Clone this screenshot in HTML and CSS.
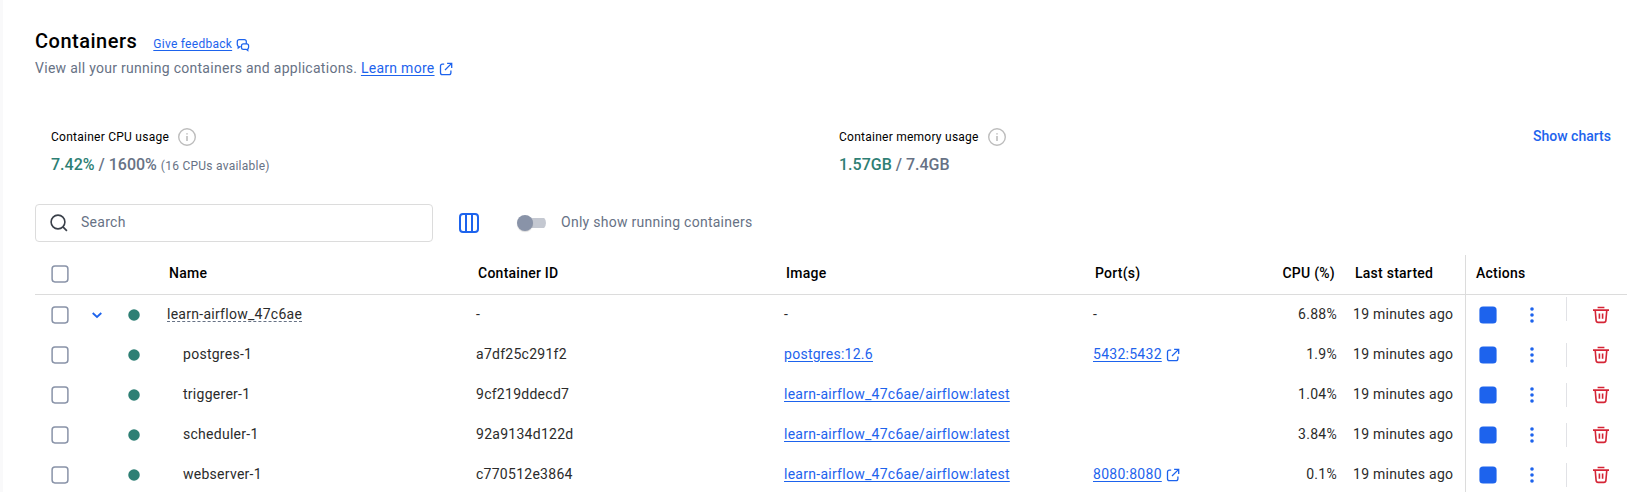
FILE: index.html
```
<!DOCTYPE html>
<html lang="en">
<head>
<meta charset="utf-8">
<title>Containers</title>
<link rel="stylesheet" href="styles.css">
</head>
<body>
<svg class="defs" width="0" height="0">
  <symbol id="i-external" viewBox="0 0 14 14"><path d="M5.2 2.2H3.4Q1.5 2.2 1.5 4.1v6.6q0 1.9 1.9 1.9H10q1.9 0 1.9-1.9V8.6M8.1 1.3h4.6v4.6M12.4 1.6 6 8" fill="none" stroke="currentColor" stroke-width="1.3"/></symbol>
  <symbol id="i-feedback" viewBox="0 0 14 14"><path d="M4.6 8.7H3.9L2.2 10V8.2Q1.3 7.6 1.3 6.5V3.6q0-2 2-2h5q2 0 2 2v1.6M7.4 5.9h3.3q1.9 0 1.9 1.9v1.5q0 1-.8 1.6v1.6l-1.6-1.2H7.4q-1.9 0-1.9-1.9V7.8q0-1.9 1.9-1.9Z" fill="none" stroke="currentColor" stroke-width="1.25"/></symbol>
  <symbol id="i-info" viewBox="0 0 18 18"><circle cx="9" cy="9" r="8.3" fill="none" stroke="currentColor" stroke-width="1.4"/><path d="M8.2 5.2h1.6v1.4H8.2zM8.2 7.9h1.6v5H8.2z" fill="currentColor"/></symbol>
  <symbol id="i-trash" viewBox="0 0 18 18"><path d="M5.6 1.5h6.8M1 4.1h16M3.2 4.2l.9 10.2q.2 2 2 2h5.8q1.8 0 2-2l.9-10.2M7.4 7.5v5.2M10.6 7.5v5.2" fill="none" stroke="currentColor" stroke-width="1.6"/></symbol>
  <symbol id="i-more" viewBox="0 0 4 16"><circle cx="2" cy="2" r="1.8" fill="currentColor"/><circle cx="2" cy="8" r="1.8" fill="currentColor"/><circle cx="2" cy="14" r="1.8" fill="currentColor"/></symbol>
  <symbol id="i-check" viewBox="0 0 18 18"><rect x="1.1" y="1.1" width="15.8" height="15.8" rx="2.8" fill="none" stroke="currentColor" stroke-width="1.5"/></symbol>
  <symbol id="i-dot" viewBox="0 0 12 12"><circle cx="6" cy="6" r="5.75" fill="currentColor"/></symbol>
  <symbol id="i-stop" viewBox="0 0 18 18"><rect x=".4" y=".4" width="17.2" height="17.2" rx="3.6" fill="currentColor"/></symbol>
</svg>
<main class="page">
  <header class="title-row">
    <h1>Containers</h1>
    <span class="feedback"><a href="#">Give feedback</a><svg width="14" height="14"><use href="#i-feedback"/></svg></span>
  </header>
  <p class="subtitle">View all your running containers and applications. <a href="#">Learn more</a><svg width="14" height="14"><use href="#i-external"/></svg></p>

  <section class="stats">
    <div class="stat">
      <div class="stat-label">Container CPU usage<svg width="18" height="18"><use href="#i-info"/></svg></div>
      <div class="stat-value"><b>7.42%</b> / 1600% <small>(16 CPUs available)</small></div>
    </div>
    <div class="stat">
      <div class="stat-label">Container memory usage<svg width="18" height="18"><use href="#i-info"/></svg></div>
      <div class="stat-value"><b>1.57GB</b> / 7.4GB</div>
    </div>
    <a class="show-charts">Show charts</a>
  </section>

  <section class="toolbar">
    <div class="search">
      <svg width="18" height="18" viewBox="0 0 18 18"><circle cx="8" cy="8" r="6.9" fill="none" stroke="#393f49" stroke-width="1.6"/><path d="m12.9 12.9 4 4" stroke="#393f49" stroke-width="1.7"/></svg>
      <span>Search</span>
    </div>
    <svg class="columns" width="20" height="20" viewBox="0 0 20 20"><path d="M4 1h12q3 0 3 3v12q0 3-3 3H4q-3 0-3-3V4q0-3 3-3ZM7 1v18M13 1v18" fill="none" stroke="#1d63ed" stroke-width="2"/></svg>
    <span class="switch"><i></i></span>
    <span class="switch-label">Only show running containers</span>
  </section>

  <section class="table">
    <div class="row head">
      <div class="mid"><svg class="check" width="18" height="18"><use href="#i-check"/></svg></div><div></div><div></div>
      <div class="cell">Name</div><div class="cell">Container ID</div><div class="cell">Image</div><div class="cell">Port(s)</div>
      <div class="cell num">CPU (%)</div><div class="cell">Last started</div><div class="cell actions-head">Actions</div>
    </div>
    <div class="row group">
      <div class="mid"><svg class="check" width="18" height="18"><use href="#i-check"/></svg></div>
      <div class="mid"><svg width="12" height="12" viewBox="0 0 12 12"><path d="M1.7 4 6 8l4.3-4" fill="none" stroke="#1d63ed" stroke-width="1.8"/></svg></div>
      <div class="mid"><svg class="dot" width="12" height="12"><use href="#i-dot"/></svg></div>
      <div class="cell"><span class="app">learn-airflow_47c6ae</span></div><div class="cell">-</div><div class="cell">-</div><div class="cell">-</div>
      <div class="cell num">6.88%</div><div class="cell">19 minutes ago</div>
      <div class="actions"><svg class="stop" width="18" height="18"><use href="#i-stop"/></svg><svg class="more" width="4" height="16"><use href="#i-more"/></svg><i class="sep"></i><svg class="trash" width="18" height="18"><use href="#i-trash"/></svg></div>
    </div>
    <div class="row">
      <div class="mid"><svg class="check" width="18" height="18"><use href="#i-check"/></svg></div><div></div>
      <div class="mid"><svg class="dot" width="12" height="12"><use href="#i-dot"/></svg></div>
      <div class="cell child">postgres-1</div><div class="cell">a7df25c291f2</div><div class="cell"><a href="#">postgres:12.6</a></div><div class="cell"><a href="#">5432:5432</a><svg width="14" height="14"><use href="#i-external"/></svg></div>
      <div class="cell num">1.9%</div><div class="cell">19 minutes ago</div>
      <div class="actions"><svg class="stop" width="18" height="18"><use href="#i-stop"/></svg><svg class="more" width="4" height="16"><use href="#i-more"/></svg><i class="sep"></i><svg class="trash" width="18" height="18"><use href="#i-trash"/></svg></div>
    </div>
    <div class="row">
      <div class="mid"><svg class="check" width="18" height="18"><use href="#i-check"/></svg></div><div></div>
      <div class="mid"><svg class="dot" width="12" height="12"><use href="#i-dot"/></svg></div>
      <div class="cell child">triggerer-1</div><div class="cell">9cf219ddecd7</div><div class="cell"><a href="#">learn-airflow_47c6ae/airflow:latest</a></div><div class="cell"></div>
      <div class="cell num">1.04%</div><div class="cell">19 minutes ago</div>
      <div class="actions"><svg class="stop" width="18" height="18"><use href="#i-stop"/></svg><svg class="more" width="4" height="16"><use href="#i-more"/></svg><i class="sep"></i><svg class="trash" width="18" height="18"><use href="#i-trash"/></svg></div>
    </div>
    <div class="row">
      <div class="mid"><svg class="check" width="18" height="18"><use href="#i-check"/></svg></div><div></div>
      <div class="mid"><svg class="dot" width="12" height="12"><use href="#i-dot"/></svg></div>
      <div class="cell child">scheduler-1</div><div class="cell">92a9134d122d</div><div class="cell"><a href="#">learn-airflow_47c6ae/airflow:latest</a></div><div class="cell"></div>
      <div class="cell num">3.84%</div><div class="cell">19 minutes ago</div>
      <div class="actions"><svg class="stop" width="18" height="18"><use href="#i-stop"/></svg><svg class="more" width="4" height="16"><use href="#i-more"/></svg><i class="sep"></i><svg class="trash" width="18" height="18"><use href="#i-trash"/></svg></div>
    </div>
    <div class="row">
      <div class="mid"><svg class="check" width="18" height="18"><use href="#i-check"/></svg></div><div></div>
      <div class="mid"><svg class="dot" width="12" height="12"><use href="#i-dot"/></svg></div>
      <div class="cell child">webserver-1</div><div class="cell">c770512e3864</div><div class="cell"><a href="#">learn-airflow_47c6ae/airflow:latest</a></div><div class="cell"><a href="#">8080:8080</a><svg width="14" height="14"><use href="#i-external"/></svg></div>
      <div class="cell num">0.1%</div><div class="cell">19 minutes ago</div>
      <div class="actions"><svg class="stop" width="18" height="18"><use href="#i-stop"/></svg><svg class="more" width="4" height="16"><use href="#i-more"/></svg><i class="sep"></i><svg class="trash" width="18" height="18"><use href="#i-trash"/></svg></div>
    </div>
  </section>
</main>
</body>
</html>
```
FILE: styles.css
```
* { box-sizing: border-box; }
body {
  margin: 0;
  background: #fff;
  font: 14px/20px Roboto, sans-serif;
  letter-spacing: 0.27px;
  color: #2b2b2b;
}
.defs { display: block; position: absolute; }
svg { flex: none; }
.page {
  height: 492px;
  overflow: hidden;
  padding: 26px 18px 0 32px;
  border-left: 3px solid #f9f9fa;
}
a { color: #1d63ed; text-decoration: underline; text-underline-offset: 2px; }

.title-row { display: flex; height: 32px; }
h1 { margin: 0; font-size: 20px; line-height: 30px; font-weight: 500; letter-spacing: 0.5px; color: #000; }
.feedback { display: flex; margin-left: 16px; padding-top: 9px; font-size: 12px; line-height: 18px; color: #1d63ed; }
.feedback svg { margin: 3px 0 0 4px; }
.subtitle { display: flex; align-items: flex-start; margin: 0; height: 20px; letter-spacing: 0.28px; color: #677285; white-space: pre; }
.subtitle svg { margin: 4px 0 0 4px; color: #1d63ed; }

.stats { display: flex; margin-top: 49px; height: 77px; padding: 0 16px; }
.stat { width: 788px; }
.stat:nth-child(2) { flex: 1; }
.stat-label { display: flex; align-items: center; gap: 9px; height: 20px; font-size: 12px; letter-spacing: 0.25px; color: #000; }
.stat-label svg { color: #bdbdbd; }
.stat-value { margin-top: 8px; font-size: 16px; line-height: 20px; font-weight: 500; letter-spacing: 0; color: #677285; white-space: nowrap; }
.stat-value b { font-weight: 500; color: #2e7f74; }
.stat-value small { font-size: 12px; font-weight: 400; letter-spacing: 0.25px; }
.show-charts { width: 78px; margin: -1px 0 0 -94px; font-weight: 500; letter-spacing: 0; text-decoration: none; white-space: nowrap; }

.toolbar { display: flex; align-items: center; height: 38px; color: #677285; }
.search { display: flex; align-items: center; width: 398px; height: 38px; padding: 0 14px; border: 1px solid #dcdcdc; border-radius: 4px; gap: 13px; }
.search span { padding-bottom: 2px; }
.columns { margin-left: 26px; }
.switch { display: flex; align-items: center; width: 29px; height: 16px; margin-left: 38px; background: linear-gradient(#c4c8d1, #c4c8d1) 4px 3px / 25px 10px no-repeat; border-radius: 8px; }
.switch i { width: 16px; height: 16px; border-radius: 50%; background: #8993a8; box-shadow: 0 1px 1px rgba(0, 0, 0, 0.15); }
.switch-label { margin-left: 15px; padding-bottom: 2px; }

.table { margin-top: 13px; }
.row { display: grid; grid-template-columns: 50px 24px 50px 309px 308px 309px 171px 89px 120px 162px; height: 40px; }
.row > * { display: flex; align-items: center; }
.mid { justify-content: center; }
.cell { padding: 0 8px 2px; white-space: nowrap; }
.cell svg { margin: 2px 0 0 4px; color: #1d63ed; }
.cell.num { justify-content: flex-end; }
.cell.child { padding-left: 24px; }
.head { border-bottom: 1px solid #dcdcdc; font-weight: 500; letter-spacing: 0.25px; color: #000; }
.head .cell { padding: 0 10px 3px; }
.head .mid { padding-bottom: 1px; }
.row .actions, .row .actions-head { border-left: 1px solid #dcdcdc; }
.check { color: #8993a8; }
.dot { color: #2e7f74; }
.app { height: 17px; margin-top: -1px; line-height: 18px; border-bottom: 1px dashed #677285; }
.stop { margin-left: 13px; color: #1d63ed; }
.more { margin-left: 33px; color: #1d63ed; }
.sep { width: 1px; height: 24px; margin-left: 32px; background: #e1e2e6; }
.group .sep { margin-bottom: 12px; }
.trash { margin-left: 25px; color: #d52536; }
```
